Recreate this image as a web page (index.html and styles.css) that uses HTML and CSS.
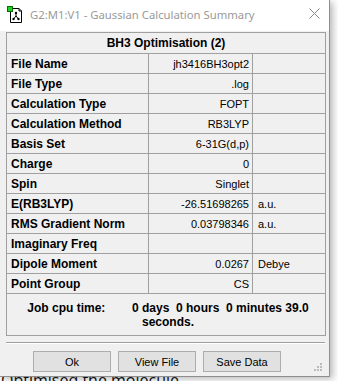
FILE: index.html
```html
<!DOCTYPE html>
<html lang="en">
<head>
    <meta charset="UTF-8">
    <title>Gaussian Calculation Summary</title>
    <link rel="stylesheet" href="styles.css">
</head>
<body>
    <div class="window">
        <div class="titlebar">
            <svg class="app-icon" width="16" height="17" viewBox="0 0 16 17">
                <path d="M3.5 2.5 H12 L14.5 5 V16.5 H3.5 Z" fill="#fff" stroke="#000"/>
                <path d="M12 2.5 V5 H14.5" fill="none" stroke="#000"/>
                <rect x="0.5" y="0.5" width="5" height="5" fill="#1ed31e" stroke="#0a6a0a"/>
                <path d="M9 7 V10 M9 10 L6.5 13 M9 10 L11.5 13" stroke="#000" stroke-width="1"/>
                <circle cx="9" cy="7" r="1.2" fill="#000"/>
                <circle cx="6.5" cy="13" r="1.2" fill="#000"/>
                <circle cx="11.5" cy="13" r="1.2" fill="#000"/>
            </svg>
            <span class="title">G2:M1:V1 - Gaussian Calculation Summary</span>
            <svg class="close" width="11" height="11" viewBox="0 0 11 11">
                <path d="M0.5 0.5 L10.5 10.5 M10.5 0.5 L0.5 10.5" stroke="#8a8a8a" stroke-width="1"/>
            </svg>
        </div>
        <div class="content">
            <table class="summary">
                <colgroup>
                    <col class="c-label">
                    <col class="c-value">
                    <col class="c-unit">
                </colgroup>
                <tr><th colspan="3">BH3 Optimisation (2)</th></tr>
                <tr><td class="label">File Name</td><td class="value">jh3416BH3opt2</td><td class="unit"></td></tr>
                <tr><td class="label">File Type</td><td class="value">.log</td><td class="unit"></td></tr>
                <tr><td class="label">Calculation Type</td><td class="value">FOPT</td><td class="unit"></td></tr>
                <tr><td class="label">Calculation Method</td><td class="value">RB3LYP</td><td class="unit"></td></tr>
                <tr><td class="label">Basis Set</td><td class="value">6-31G(d,p)</td><td class="unit"></td></tr>
                <tr><td class="label">Charge</td><td class="value">0</td><td class="unit"></td></tr>
                <tr><td class="label">Spin</td><td class="value">Singlet</td><td class="unit"></td></tr>
                <tr><td class="label">E(RB3LYP)</td><td class="value">-26.51698265</td><td class="unit">a.u.</td></tr>
                <tr><td class="label">RMS Gradient Norm</td><td class="value">0.03798346</td><td class="unit">a.u.</td></tr>
                <tr><td class="label">Imaginary Freq</td><td class="value"></td><td class="unit"></td></tr>
                <tr><td class="label">Dipole Moment</td><td class="value">0.0267</td><td class="unit">Debye</td></tr>
                <tr><td class="label">Point Group</td><td class="value">CS</td><td class="unit"></td></tr>
                <tr><td colspan="3" class="cpu">Job cpu time:        0 days  0 hours  0 minutes 39.0<br>seconds.</td></tr>
            </table>
            <div class="separator"></div>
            <div class="buttons">
                <button>Ok</button>
                <button>View File</button>
                <button>Save Data</button>
            </div>
        </div>
        <svg class="grip" width="8" height="8" viewBox="0 0 8 8">
            <rect x="6" y="0" width="2" height="2" fill="#bcbcbc"/>
            <rect x="3" y="3" width="2" height="2" fill="#bcbcbc"/>
            <rect x="6" y="3" width="2" height="2" fill="#bcbcbc"/>
            <rect x="0" y="6" width="2" height="2" fill="#bcbcbc"/>
            <rect x="3" y="6" width="2" height="2" fill="#bcbcbc"/>
            <rect x="6" y="6" width="2" height="2" fill="#bcbcbc"/>
        </svg>
    </div>
    <p class="behind">Optimised the molecule</p>
</body>
</html>
```

FILE: styles.css
```css
*{
    margin:0;
    padding:0;
    box-sizing:border-box;
}
body{
    background:#fff;
    height:381px;
    overflow:hidden;
    font-family:"Liberation Sans", Arial, sans-serif;
    color:#000;
}
.window{
    position:relative;
    z-index:1;
    width:330px;
    height:377px;
    background:#f0f0f0;
    border-right:1px solid #8e8e8e;
    border-bottom:1px solid #8e8e8e;
    box-shadow:3px 2px 7px rgba(0,0,0,0.28);
}
.titlebar{
    display:flex;
    align-items:center;
    height:31px;
    background:#fff;
    padding-left:7px;
}
.app-icon{
    margin-right:7px;
    margin-top:-2px;
}
.title{
    font-family:"Noto Sans", "Liberation Sans", sans-serif;
    font-size:11.3px;
    color:#9a9a9a;
    margin-top:-3px;
}
.close{
    margin-left:auto;
    margin-right:9px;
    margin-top:-5px;
}
.content{
    padding:1px 0 0 6px;
}
.summary{
    border-collapse:collapse;
    table-layout:fixed;
    width:319px;
}
.c-label{ width:142px; }
.c-value{ width:104px; }
.c-unit{ width:73px; }
.summary th,
.summary td{
    border:1px solid #a0a0a0;
    height:20px;
    white-space:nowrap;
    overflow:hidden;
}
.summary th{
    font-size:12px;
    font-weight:bold;
    text-align:center;
    height:21px;
}
.label{
    font-size:12px;
    font-weight:bold;
    padding-left:4px;
}
.value{
    font-size:11px;
    text-align:right;
    padding-right:3px;
}
.unit{
    font-size:11px;
    padding-left:5px;
}
.summary td.cpu{
    height:42px;
    font-size:12px;
    font-weight:bold;
    text-align:center;
    white-space:pre;
    line-height:14px;
    padding-left:4px;
}
.separator{
    width:319px;
    margin-top:6px;
    border-top:1px solid #a0a0a0;
    border-bottom:1px solid #fff;
}
.buttons{
    display:flex;
    gap:7px;
    margin-top:7px;
    padding-left:27px;
}
.buttons button{
    width:78px;
    height:21px;
    background:#e1e1e1;
    border:1px solid #adadad;
    font-family:"Liberation Sans", Arial, sans-serif;
    font-size:11px;
    color:#000;
}
.grip{
    position:absolute;
    right:7px;
    bottom:5px;
}
.behind{
    margin-top:-7px;
    padding-left:1px;
    font-family:"Open Sans", sans-serif;
    font-size:16px;
    line-height:20px;
    color:#111;
}
```
